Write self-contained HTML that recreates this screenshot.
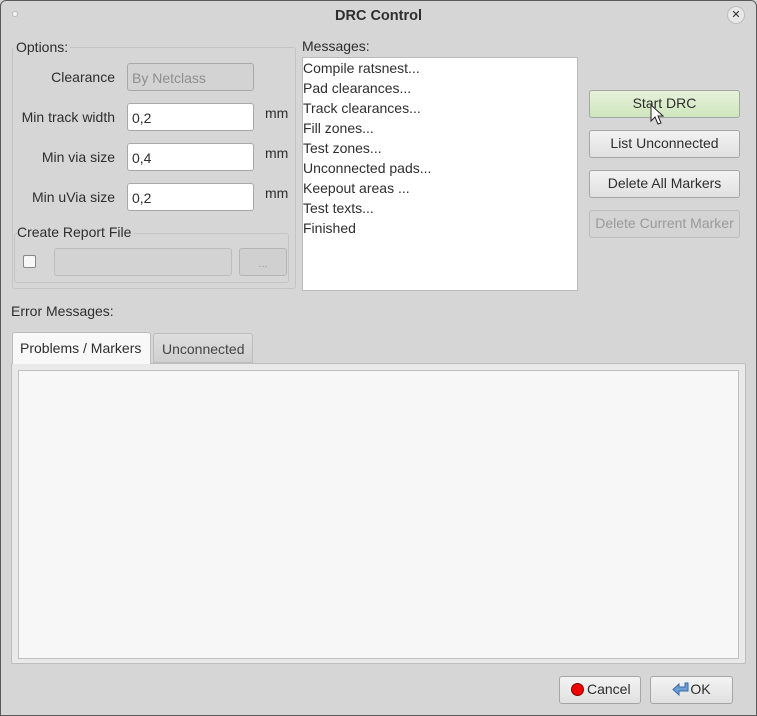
<!DOCTYPE html>
<html><head><style>
*{box-sizing:border-box;margin:0;padding:0}
body{width:757px;height:716px;background:#d6d6d6;font-family:"Liberation Sans",sans-serif;font-size:14px;color:#2e2e2e;position:relative;overflow:hidden}
.a{position:absolute;white-space:nowrap}
.win{position:absolute;left:0;top:0;width:757px;height:716px;border:1px solid #5a5a5a;border-radius:6px 6px 0 0}
.fs{position:absolute;border:1px solid #c4c4c4;border-radius:3px}
.inp{position:absolute;background:#fff;border:1px solid #a8a8a8;border-radius:3px;padding:6px 0 0 4px;color:#2e2e2e}
.btn{position:absolute;border:1px solid #a6a6a6;border-radius:3px;background:linear-gradient(#f3f3f3,#e0e0e0);text-align:center;line-height:25px;color:#2e2e2e}
.lbl{position:absolute;text-align:right;width:100px}
</style></head><body>
<div class="win"></div>
<div class="a" style="left:12px;top:11px;width:6px;height:6px;border-radius:3px;background:#f5f5f5;border:1px solid #bbb"></div>
<div class="a" style="left:0;width:757px;top:8px;text-align:center;font-weight:bold;font-size:14.5px">DRC Control</div>
<div class="a" style="left:727px;top:6px;width:18px;height:18px;border-radius:9px;background:#e8e8e8;border:1px solid #bdbdbd;font-size:11px;text-align:center;line-height:16px">✕</div>

<div class="fs" style="left:12px;top:47px;width:284px;height:242px"></div>
<div class="a" style="left:14px;top:39px;background:#d6d6d6;padding:0 2px 0 2px">Options:</div>
<div class="lbl" style="left:15px;top:69px">Clearance</div>
<div class="inp" style="left:127px;top:63px;width:127px;height:28px;background:#d3d3d3;color:#8e8e8e">By Netclass</div>
<div class="lbl" style="left:15px;top:109px">Min track width</div>
<div class="inp" style="left:127px;top:103px;width:127px;height:28px">0,2</div>
<div class="a" style="left:265px;top:105px">mm</div>
<div class="lbl" style="left:15px;top:149px">Min via size</div>
<div class="inp" style="left:127px;top:143px;width:127px;height:28px">0,4</div>
<div class="a" style="left:265px;top:145px">mm</div>
<div class="lbl" style="left:15px;top:189px">Min uVia size</div>
<div class="inp" style="left:127px;top:183px;width:127px;height:28px">0,2</div>
<div class="a" style="left:265px;top:185px">mm</div>
<div class="fs" style="left:14px;top:233px;width:275px;height:50px"></div>
<div class="a" style="left:17px;top:224px;background:#d6d6d6;padding-right:3px">Create Report File</div>
<div class="a" style="left:23px;top:255px;width:13px;height:13px;background:#f8f8f8;border:1px solid #888;border-radius:2px"></div>
<div class="a" style="left:54px;top:248px;width:178px;height:28px;border:1px solid #bdbdbd;border-radius:3px;background:#d3d3d3"></div>
<div class="a" style="left:239px;top:248px;width:48px;height:28px;border:1px solid #b5b5b5;border-radius:3px;background:#d0d0d0;color:#999;text-align:center;line-height:30px;font-size:11px">...</div>

<div class="a" style="left:302px;top:38px">Messages:</div>
<div class="a" style="left:302px;top:57px;width:276px;height:234px;background:#fff;border:1px solid #bbb;padding:0 0 0 0;line-height:20px">Compile ratsnest...<br>Pad clearances...<br>Track clearances...<br>Fill zones...<br>Test zones...<br>Unconnected pads...<br>Keepout areas ...<br>Test texts...<br>Finished</div>

<div class="btn" style="left:589px;top:90px;width:151px;height:28px;background:linear-gradient(#e6f2da,#cfe6bd)">Start DRC</div>
<svg class="a" style="left:650px;top:104px" width="14" height="22"><path d="M1 1 L1 17 L5 13 L8 20 L11 19 L8 12 L13 12 Z" fill="#fff" stroke="#222" stroke-width="1"/></svg>
<div class="btn" style="left:589px;top:130px;width:151px;height:28px">List Unconnected</div>
<div class="btn" style="left:589px;top:170px;width:151px;height:28px">Delete All Markers</div>
<div class="btn" style="left:589px;top:210px;width:151px;height:28px;background:#d4d4d4;color:#9a9a9a;border-color:#bcbcbc">Delete Current Marker</div>

<div class="a" style="left:11px;top:303px">Error Messages:</div>
<div class="a" style="left:11px;top:363px;width:735px;height:301px;border:1px solid #bdbdbd;border-radius:2px;background:#e9e9e9"></div>
<div class="a" style="left:18px;top:370px;width:721px;height:289px;background:#f7f7f7;border:1px solid #c0c0c0"></div>
<div class="a" style="left:12px;top:332px;width:139px;height:32px;border:1px solid #bdbdbd;border-bottom:none;border-radius:3px 3px 0 0;background:#f8f8f8;padding:7px 0 0 7px">Problems / Markers</div>
<div class="a" style="left:153px;top:333px;width:100px;height:30px;border:1px solid #bdbdbd;border-radius:3px 3px 0 0;background:linear-gradient(#dedede,#cfcfcf);padding:7px 0 0 8px;color:#444">Unconnected</div>

<div class="btn" style="left:559px;top:676px;width:82px;height:28px;text-align:left;padding-left:11px"><span style="display:inline-block;width:13px;height:13px;border-radius:50%;background:#e00;border:1px solid #800;vertical-align:-2px;margin-right:3px"></span>Cancel</div>
<div class="btn" style="left:650px;top:676px;width:83px;height:28px"><svg width="18" height="14" style="vertical-align:-2px"><path d="M13 1 L16 1 L16 9 L7 9 L7 13 L1 7.5 L7 2 L7 5 L13 5 Z" fill="#6c9fd8" stroke="#3a6aa8" stroke-width="1"/></svg>OK</div>
</body></html>
